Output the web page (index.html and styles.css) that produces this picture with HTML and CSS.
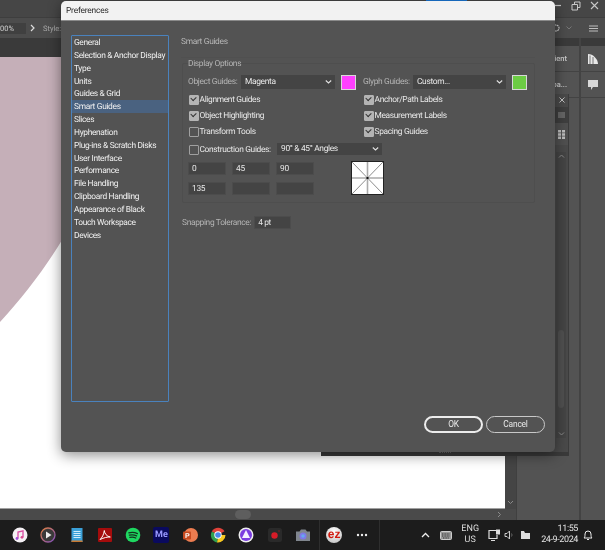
FILE: index.html
```html
<!DOCTYPE html>
<html lang="en">
<head>
<meta charset="utf-8">
<title>Preferences</title>
<link rel="stylesheet" href="styles.css">
</head>
<body>
<div class="screen">
  <div class="app">
    <div class="menubar">
      <span class="blue-strip"></span>
      <div class="win-controls">
        <svg width="12" height="9" viewBox="0 0 12 9"><path d="M1 4.500h10" stroke="#c8c8c8" stroke-width="1.200"/></svg>
        <svg width="10" height="10" viewBox="0 0 10 10"><path d="M1 3.500h5.500v5.500H1zM3.500 3.500V1H9v5.500H6.500" fill="none" stroke="#c8c8c8"/></svg>
        <svg width="9" height="9" viewBox="0 0 9 9"><path d="M1 1l7 7M8 1L1 8" stroke="#c8c8c8" stroke-width="1.100"/></svg>
      </div>
    </div>
    <div class="optionsbar">
      <span class="zoom-field">00%</span>
      <svg class="opt-chev" width="5" height="8" viewBox="0 0 5 8"><path d="M1 1l3 3-3 3" fill="none" stroke="#ddd" stroke-width="1.200"/></svg>
      <span class="opt-label">Style:</span>
      <div class="opt-right">
        <svg width="10" height="10" viewBox="0 0 10 10"><path d="M1 0v10M4 2h2a3 3 0 0 1 0 6H4" fill="none" stroke="#cfcfcf" stroke-width="1.200" stroke-dasharray="2 .6"/></svg>
        <svg width="6" height="4" viewBox="0 0 6 4"><path d="M.5.500L3 3 5.500.500" fill="none" stroke="#777"/></svg>
        <svg class="opt-list" width="9" height="7" viewBox="0 0 9 7"><path d="M0 1h9M0 3.500h9M0 6h9" stroke="#bdbdbd"/></svg>
      </div>
    </div>
    <div class="workspace">
      <div class="doc">
        <div class="tabbar"></div>
        <div class="doc-mid">
          <div class="artboard">
            <svg class="blob" width="505" height="452" viewBox="0 0 505 452" preserveAspectRatio="none"><path d="M0 0H505V0H140C105 120 60 200 0 265Z" fill="#c5afb8"/></svg>
          </div>
          <div class="doc-vscroll">
            <svg width="7" height="5" viewBox="0 0 7 5"><path d="M1 1l2.500 2.500L6 1" fill="none" stroke="#8a8a8a"/></svg>
          </div>
        </div>
        <div class="doc-hscroll">
          <span class="h-thumb"></span>
          <svg class="h-arrow" width="5" height="7" viewBox="0 0 5 7"><path d="M1 1l2.500 2.500L1 6" fill="none" stroke="#8a8a8a"/></svg>
        </div>
      </div>
      <div class="panels">
        <div class="panel-col wide">
          <div class="panel-head"></div>
          <div class="panel-row"><span class="cut-label">ient</span></div>
          <div class="panel-row"><span class="cut-label">pa...</span></div>
        </div>
        <div class="panel-col narrow">
          <div class="panel-head"></div>
          <div class="panel-row icon-row">
            <svg width="12" height="12" viewBox="0 0 12 12"><path d="M1 1C6 1 11 6 11 11H1Z" fill="#e8e8e8"/><path d="M3 2.500V11M6 4V11" stroke="#777"/></svg>
          </div>
          <div class="panel-row icon-row">
            <svg width="12" height="12" viewBox="0 0 12 12"><path d="M1 1h10v7H6l-2 3V8H1Z" fill="#d8d8d8"/></svg>
          </div>
        </div>
      </div>
    </div>
    <div class="taskbar">
      <div class="tb-icons">
        <svg class="tb-ic" viewBox="0 0 16 16"><circle cx="8" cy="8" r="7.500" fill="#f4f0f4"/><path d="M6 11.500V5l5-1.200V10" fill="none" stroke="#d84aa0" stroke-width="1.300"/><circle cx="5" cy="11.500" r="1.400" fill="#a050d8"/><circle cx="10" cy="10.300" r="1.400" fill="#d84a90"/></svg>
        <svg class="tb-ic" viewBox="0 0 16 16"><defs><linearGradient id="ring" x1="0" y1="0" x2="1" y2="1"><stop offset="0" stop-color="#e08040"/><stop offset="1" stop-color="#8050c0"/></linearGradient></defs><circle cx="8" cy="8" r="7" fill="#3a3a3a" stroke="url(#ring)" stroke-width="1.300"/><path d="M6 4.500l5.500 3.500L6 11.500Z" fill="#eee"/></svg>
        <svg class="tb-ic" viewBox="0 0 16 16"><rect x="2.500" y="1" width="11" height="14" fill="#3aa0d8"/><rect x="2.500" y="13.500" width="11" height="1.500" fill="#c87830"/><path d="M4.500 4.500h7M4.500 6.500h7M4.500 8.500h7M4.500 10.500h7" stroke="#d0ecfa"/></svg>
        <svg class="tb-ic" viewBox="0 0 16 16"><rect x="1" y="1" width="14" height="14" rx="1" fill="#a50c0c"/><path d="M3 12.500C5 11 7 7 7.300 3.500c.2 3 2.500 6 6 6.500-3-.2-6.500.8-10.300 2.500Z" fill="none" stroke="#fff" stroke-width="1"/></svg>
        <svg class="tb-ic" viewBox="0 0 16 16"><circle cx="8" cy="8" r="7.300" fill="#1ed760"/><path d="M3.800 5.800c3-.8 6-.6 8.600.8M4.300 8.200c2.600-.7 5-.5 7.300.7M4.800 10.400c2-.5 4.200-.4 6 .6" fill="none" stroke="#14331f" stroke-width="1.200" stroke-linecap="round"/></svg>
        <span class="tb-ic me-ic">Me</span>
        <svg class="tb-ic" viewBox="0 0 16 16"><circle cx="9" cy="8" r="7" fill="#ec7c50"/><rect x="1" y="4.500" width="8" height="8" rx="1" fill="#c74a20"/><text x="3" y="11" class="ppt-p">P</text></svg>
        <svg class="tb-ic" viewBox="0 0 16 16"><path d="M8 8L1.800 4.400A7.500 7.500 0 0 1 14.500 4.300Z" fill="#e0423a"/><path d="M8 8H15.500A7.500 7.500 0 0 1 7 15.400Z" fill="#f8c820"/><path d="M8 8L7 15.400A7.500 7.500 0 0 1 1.800 4.400Z" fill="#30a050"/><circle cx="8" cy="8" r="3.700" fill="#fff"/><circle cx="8" cy="8" r="2.800" fill="#4a88e8"/></svg>
        <svg class="tb-ic" viewBox="0 0 16 16"><circle cx="8" cy="8" r="7.500" fill="#eee"/><circle cx="8" cy="8" r="6" fill="#7a3ce0"/><path d="M8 3l4 8H4Z" fill="#f4f0ff"/></svg>
        <svg class="tb-ic" viewBox="0 0 16 16"><rect x="1" y="1" width="14" height="14" rx="2.500" fill="#2a2a2a"/><circle cx="7.500" cy="8.500" r="3.200" fill="#d81c28"/><circle cx="12" cy="4" r="1" fill="#622"/></svg>
        <svg class="tb-ic" viewBox="0 0 16 16"><path d="M1 4.500h3.500L6 2.500h4.500L12 4.500h3V14H1Z" fill="#80868e"/><circle cx="8" cy="9" r="3.500" fill="#7f78e8"/><circle cx="8" cy="9" r="1.800" fill="#66a8f0"/></svg>
        <span class="tb-sep"></span>
        <span class="tb-ic ez-ic">ez</span>
        <svg class="tb-ic" viewBox="0 0 16 16"><circle cx="4" cy="8" r="1.200" fill="#eee"/><circle cx="8" cy="8" r="1.200" fill="#eee"/><circle cx="12" cy="8" r="1.200" fill="#eee"/></svg>
        <span class="tb-sep right"></span>
      </div>
      <div class="tray">
        <svg class="tray-up" width="9" height="6" viewBox="0 0 9 6"><path d="M1 5l3.500-3.500L8 5" fill="none" stroke="#eee" stroke-width="1.300"/></svg>
        <svg class="tray-kb" width="12" height="9" viewBox="0 0 12 9"><rect x=".5" y=".5" width="11" height="8" rx="1" fill="#999" stroke="#ccc"/><path d="M2 3h8M2 5h8M3 7h6" stroke="#333" stroke-dasharray="1 .6"/></svg>
        <span class="lang">ENG<br>US</span>
        <svg class="tray-mon" width="13" height="13" viewBox="0 0 13 13"><path d="M8 1.500H1v8h8V6" fill="none" stroke="#ddd" stroke-width="1.200"/><rect x="8" y=".5" width="4" height="5" fill="#ddd"/><path d="M3 11.500h4" stroke="#ddd"/></svg>
        <svg class="tray-vol" width="11" height="10" viewBox="0 0 11 10"><path d="M1 3.500h2L5.500 1v8L3 6.500H1Z" fill="none" stroke="#ccc"/><path d="M7.500 3.500a2.500 2.500 0 0 1 0 3" fill="none" stroke="#666"/></svg>
        <svg class="tray-bat" width="11" height="10" viewBox="0 0 11 10"><path d="M1 1h3l1 2h5v6H1Z" fill="#ddd"/></svg>
        <span class="clock"><span>11:55</span><span>24-9-2024</span></span>
        <svg class="tray-bell" width="10" height="12" viewBox="0 0 10 12"><path d="M1 9c1-1 1-2 1-4a3 3 0 0 1 6 0c0 2 0 3 1 4ZM4 10.500h2" fill="none" stroke="#eee"/></svg>
      </div>
    </div>
  </div>

  <div class="float-panel">
    <svg class="fp-x" width="6" height="6" viewBox="0 0 6 6"><path d="M.5.500l5 5M5.500.500l-5 5" stroke="#c4c4c4"/></svg>
    <div class="fp-menu"><svg width="7" height="6" viewBox="0 0 7 6"><path d="M0 1h7M0 3h7M0 5h7" stroke="#8e8e8e"/></svg></div>
    <div class="fp-grid"><svg width="7" height="9" viewBox="0 0 7 9"><path d="M0 0h3v2.500H0zM4 0h3v2.500H4zM0 3.200h3v2.500H0zM4 3.200h3v2.500H4zM0 6.500h3V9H0zM4 6.500h3V9H4z" fill="#bdbdbd"/></svg></div>
    <div class="fp-scroll">
      <svg width="7" height="4" viewBox="0 0 7 4"><path d="M1 3.500L3.500 1 6 3.500" fill="none" stroke="#888"/></svg>
      <span class="fp-thumb"></span>
      <svg width="7" height="4" viewBox="0 0 7 4"><path d="M1 .500L3.500 3 6 .500" fill="none" stroke="#888"/></svg>
    </div>
  </div>
  <div class="float-foot"><span class="grip"></span></div>

  <div class="dialog">
    <div class="titlebar">Preferences</div>
    <div class="dialog-body">
      <ul class="nav">
        <li>General</li>
        <li>Selection &amp; Anchor Display</li>
        <li>Type</li>
        <li>Units</li>
        <li>Guides &amp; Grid</li>
        <li class="active">Smart Guides</li>
        <li>Slices</li>
        <li>Hyphenation</li>
        <li>Plug-ins &amp; Scratch Disks</li>
        <li>User Interface</li>
        <li>Performance</li>
        <li>File Handling</li>
        <li>Clipboard Handling</li>
        <li>Appearance of Black</li>
        <li>Touch Workspace</li>
        <li>Devices</li>
      </ul>
      <div class="content">
        <h2 class="section-title">Smart Guides</h2>
        <fieldset class="group">
          <legend>Display Options</legend>
          <div class="columns">
            <div class="col">
              <div class="guide-row">
                <span class="dim obj-label">Object Guides:</span>
                <div class="select obj-select"><span>Magenta</span><svg class="chev" width="7" height="4" viewBox="0 0 7 4"><path d="M.8.500L3.500 3 6.200.500" fill="none" stroke="#e0e0e0" stroke-width="1.100"/></svg></div>
                <span class="swatch magenta"></span>
              </div>
              <label class="check on">Alignment Guides</label>
              <label class="check on">Object Highlighting</label>
              <label class="check">Transform Tools</label>
            </div>
            <div class="col right">
              <div class="guide-row">
                <span class="dim gly-label">Glyph Guides:</span>
                <div class="select gly-select"><span>Custom...</span><svg class="chev" width="7" height="4" viewBox="0 0 7 4"><path d="M.8.500L3.500 3 6.200.500" fill="none" stroke="#e0e0e0" stroke-width="1.100"/></svg></div>
                <span class="swatch green"></span>
              </div>
              <label class="check on">Anchor/Path Labels</label>
              <label class="check on">Measurement Labels</label>
              <label class="check on">Spacing Guides</label>
            </div>
          </div>
          <div class="construct-row">
            <label class="check construct">Construction Guides:</label>
            <div class="select con-select"><span>90° &amp; 45° Angles</span><svg class="chev" width="7" height="4" viewBox="0 0 7 4"><path d="M.8.500L3.500 3 6.200.500" fill="none" stroke="#e0e0e0" stroke-width="1.100"/></svg></div>
          </div>
          <div class="angles">
            <div class="angle-grid">
              <span class="field">0</span><span class="field">45</span><span class="field">90</span>
              <span class="field">135</span><span class="field"></span><span class="field"></span>
            </div>
            <svg class="preview" width="33" height="34" viewBox="0 0 33 34"><rect x=".5" y=".5" width="32" height="33" fill="#fff" stroke="#222"/><path d="M1 1l31 32M32 1L1 33" stroke="#8c8c8c"/><path d="M16.500 1v32M1 17h31" stroke="#aaa" stroke-width="1.600"/><rect x="15.500" y="16" width="2" height="2" fill="#111"/></svg>
          </div>
        </fieldset>
        <div class="snap-row">
          <span class="dim">Snapping Tolerance:</span>
          <span class="field snap">4 pt</span>
        </div>
      </div>
      <div class="actions">
        <button class="btn primary" type="button">OK</button>
        <button class="btn" type="button">Cancel</button>
      </div>
    </div>
  </div>
</div>
</body>
</html>
```

FILE: styles.css
```css
* { box-sizing: border-box; }
html, body { margin: 0; padding: 0; background: #1c1c1c; }
body { font-family: Roboto, "Open Sans", sans-serif; text-rendering: geometricPrecision; overflow: hidden; }
svg { display: block; flex: none; }

.screen { position: relative; width: 605px; height: 550px; overflow: hidden; filter: blur(.3px); }
.app { display: flex; flex-direction: column; width: 605px; height: 550px; background: #535353; }

.menubar { position: relative; height: 17px; flex: none; background: #464646; display: flex; justify-content: flex-end; }
.blue-strip { position: absolute; left: 426px; top: 0; width: 41px; height: 1px; background: #1a78d8; }
.win-controls { display: flex; align-items: center; gap: 9px; padding: 0 6px 6px 0; }

.optionsbar { height: 21px; flex: none; background: #4c4c4c; border-top: 1px solid #3e3e3e; display: flex; align-items: center; font-size: 7.500px; color: #a8a8a8; }
.zoom-field { width: 26px; height: 11px; background: #404040; color: #cfcfcf; line-height: 11px; }
.opt-chev { margin-left: 4px; }
.opt-label { margin-left: 8px; }
.opt-right { margin-left: auto; display: flex; align-items: center; gap: 6px; padding-right: 7px; }
.opt-list { margin-left: 11px; }

.workspace { flex: 1; display: flex; min-height: 0; }
.doc { width: 516px; flex: none; display: flex; flex-direction: column; }
.tabbar { height: 19px; flex: none; background: #3a3a3a; }
.doc-mid { flex: 1; display: flex; min-height: 0; }
.artboard { position: relative; width: 505px; flex: none; background: #fff; overflow: hidden; border-bottom: 1px solid #a0a0a0; }
.blob { position: absolute; left: 0; top: 0; }
.doc-vscroll { flex: 1; background: #454545; display: flex; align-items: flex-end; justify-content: center; padding-bottom: 4px; }
.doc-hscroll { position: relative; height: 11px; flex: none; background: #4a4a4a; display: flex; align-items: center; }
.h-thumb { width: 16px; height: 9px; margin-left: 235px; border-radius: 5px; background: #5e5e5e; }
.h-arrow { margin-left: 246px; }

.panels { flex: 1; display: flex; border-left: 1px solid #404040; }
.panel-col { display: flex; flex-direction: column; border-right: 2px solid #434343; }
.panel-col.wide { width: 64px; }
.panel-col.narrow { flex: 1; border-right: 0; }
.panel-head { height: 8px; flex: none; background: #3a3a3a; }
.panel-row { height: 26px; flex: none; border-bottom: 1px solid #434343; font-size: 7.500px; font-weight: 500; color: #cfcfcf; display: flex; align-items: center; justify-content: flex-end; padding-right: 12px; }
.cut-label { white-space: nowrap; }
.icon-row { justify-content: center; padding: 0; }

.taskbar { height: 30px; flex: none; background: #1c1c1c; display: flex; justify-content: space-between; align-items: center; color: #e8e8e8; }
.tb-icons { display: flex; align-items: center; gap: 12.300px; padding-left: 12px; height: 100%; }
.tb-ic { width: 16px; height: 16px; flex: none; }
.ppt-p { font: 700 7px "Liberation Sans", sans-serif; fill: #fff; }
.me-ic { background: #0a0a5e; color: #9a9aff; border-radius: 2px; font: 700 9px/16px Roboto, sans-serif; text-align: center; }
.ez-ic { border-radius: 50%; background: radial-gradient(circle at 50% 30%, #fff, #bbb); color: #d21c10; font: 700 12px/14px "Liberation Sans", sans-serif; text-align: center; }
.tb-sep { width: 1px; height: 100%; background: #2e2e2e; margin: 0 -6.500px 0 -4px; }
.tb-sep.right { margin: 0 0 0 -4px; }
.tray { display: flex; align-items: center; height: 100%; padding-right: 12px; }
.tray-kb { margin-left: 10.500px; }
.lang { width: 24px; margin-left: 6px; font-size: 9px; line-height: 11px; text-align: center; color: #ddd; }
.tray-mon { margin-left: 5.500px; }
.tray-vol { margin-left: 3px; }
.tray-bat { margin-left: 5px; }
.clock { display: flex; flex-direction: column; align-items: flex-end; margin-left: 10.500px; font-size: 9px; line-height: 11px; letter-spacing: -.4px; color: #e4e4e4; }
.tray-bell { margin-left: 5px; }

.float-panel { position: absolute; left: 540px; top: 94px; width: 29px; height: 358px; padding-left: 15px; background: #4a4a4a; border-right: 1px solid #3c3c3c; display: flex; flex-direction: column; }
.fp-x { margin: 3px 0 4px 4px; }
.fp-menu { height: 16px; background: #3f3f3f; display: flex; align-items: center; justify-content: center; }
.fp-grid { height: 22px; background: #505050; display: flex; align-items: center; justify-content: center; }
.fp-scroll { flex: 1; width: 10px; margin: 7px 0 14px 1px; background: #454545; display: flex; flex-direction: column; align-items: center; padding: 2px 0; }
.fp-thumb { width: 6px; height: 78px; margin-top: auto; margin-bottom: 24px; border-radius: 3px; background: #505050; }
.float-foot { position: absolute; left: 321px; top: 452px; width: 248px; height: 4px; background: #3a3a3a; display: flex; justify-content: center; }
.grip { width: 12px; height: 2px; border-top: 1px dotted #666; }

.dialog { position: absolute; left: 61px; top: 1px; width: 494px; height: 451px; border-radius: 5px; background: #535353; box-shadow: 0 3px 14px rgba(0, 0, 0, .45); display: flex; flex-direction: column; overflow: hidden; }
.titlebar { height: 20px; flex: none; background: #f2f2f2; border-bottom: 1px solid #8a8a8a; color: #2a2a2a; font-size: 8.400px; letter-spacing: -.2px; line-height: 21px; padding-left: 5px; }
.dialog-body { flex: 1; position: relative; display: flex; padding: 14px 10px 0; color: #e6e6e6; font-size: 8.400px; letter-spacing: -.33px; }

.nav { list-style: none; margin: 0; padding: 0; width: 98px; height: 367px; flex: none; border: 1px solid #4a82bd; border-radius: 1px; }
.nav li { height: 12.850px; line-height: 14px; padding-left: 2px; white-space: nowrap; color: #f0f0f0; }
.nav .active { background: #4a6280; }

.content { width: 354px; margin-left: 12px; display: flex; flex-direction: column; }
.section-title { margin: 0; font-size: 8.400px; font-weight: 400; color: #b8b8b8; height: 23px; line-height: 14px; border-bottom: 1px solid #505050; width: 354px; }
.dim { color: #b4b4b4; }

.group { margin: 0 0 0 1px; padding: 6px 5px 0; height: 145px; border: 1px solid #4e4e4e; border-radius: 2px; min-width: 0; }
.group legend { padding: 0; height: 11px; line-height: 13px; color: #b4b4b4; }
.columns { display: flex; }
.col { display: flex; flex-direction: column; width: 175px; flex: none; }
.col.right { width: 166px; }
.guide-row { display: flex; align-items: center; height: 14px; margin-bottom: 2px; }
.obj-label { width: 53px; white-space: nowrap; }
.gly-label { width: 50px; white-space: nowrap; }
.select { position: relative; height: 14px; background: #444; display: flex; align-items: center; justify-content: space-between; padding: 0 3px 0 4px; color: #eaeaea; white-space: nowrap; }
.obj-select { width: 94px; }
.gly-select { width: 93px; }
.con-select { width: 105px; height: 12px; }
.swatch { width: 15px; height: 15px; margin-left: 6px; border: 1px solid #d8d8d8; flex: none; }
.magenta { background: #ff40ff; }
.green { background: #6ccc44; }

.check { position: relative; display: flex; align-items: center; height: 16px; padding: 1px 0 0 11.500px; color: #e8e8e8; white-space: nowrap; }
.check::before { content: ""; position: absolute; left: 1px; top: 4px; width: 8px; height: 8px; border: 1px solid #a0a0a0; border-radius: 1px; }
.check.on::before { background: #b4b4b4; border-color: #b4b4b4; }
.check.on::after { content: ""; position: absolute; left: 3px; top: 5px; width: 4px; height: 3px; border-left: 1.200px solid #333; border-bottom: 1.200px solid #333; transform: rotate(-45deg); }
.construct-row { display: flex; align-items: center; height: 12px; margin-top: 4px; }
.construct { width: 89px; height: 12px; flex: none; }
.construct::before { top: 2px; }
.angles { display: flex; align-items: flex-start; margin-top: 6px; }
.angle-grid { display: grid; grid-template-columns: repeat(3, 38px); grid-auto-rows: 13px; column-gap: 6px; row-gap: 7px; margin-top: 1px; }
.field { display: block; height: 13px; line-height: 12px; background: #444; border: 1px solid #4c4c4c; padding-left: 3px; color: #e6e6e6; }
.preview { margin-left: 37px; }

.snap-row { display: flex; align-items: center; gap: 3px; margin-top: 13px; padding-left: 1px; }
.snap { width: 37px; }

.actions { position: absolute; right: 10px; bottom: 19px; display: flex; gap: 3px; }
.btn { width: 59px; height: 17px; padding: 0; border: 1px solid #c8c8c8; border-radius: 9px; background: transparent; color: #e8e8e8; font: 8.400px/1 Roboto, sans-serif; letter-spacing: -.2px; }
.btn.primary { border: 2px solid #ececec; }
```
